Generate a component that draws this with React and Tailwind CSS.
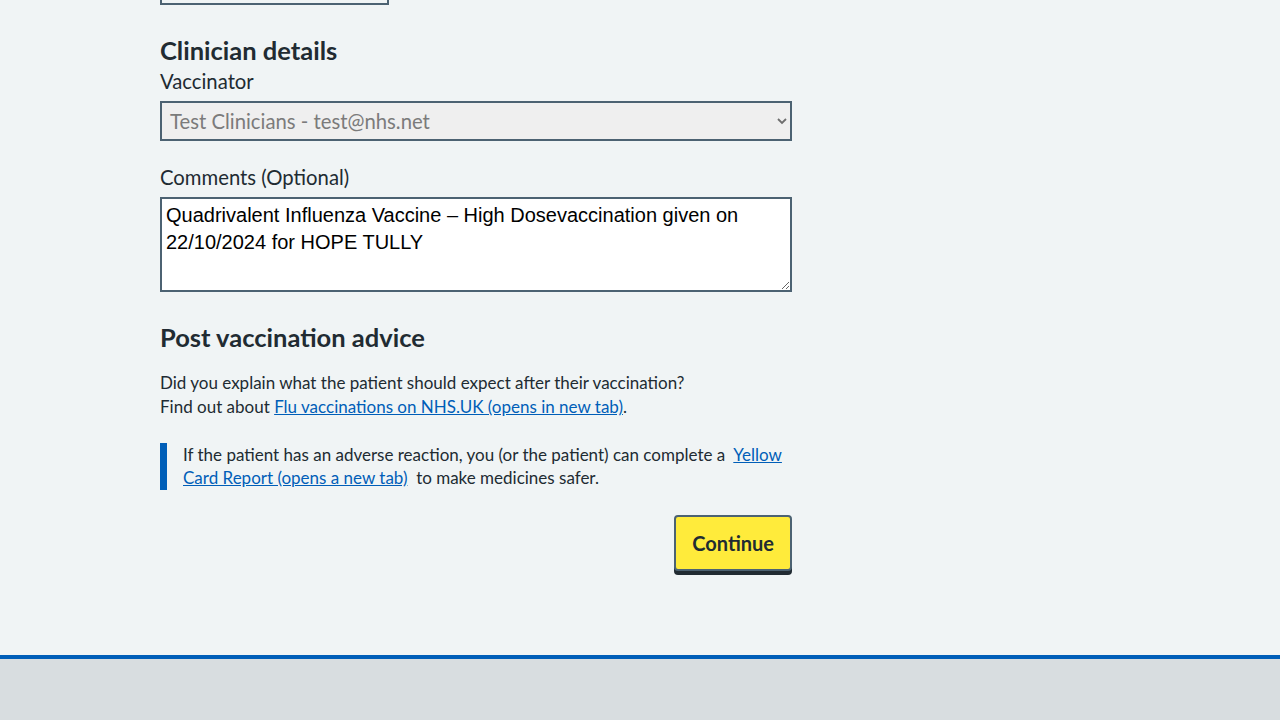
import React from "react";

export default function App() {
  const font = { fontFamily: "Lato, 'Noto Sans', sans-serif" };
  return (
    <div className="min-h-[720px] bg-[#f0f4f5] flex flex-col text-[#212b32]" style={font}>
      <main className="flex-1 pl-[160px] w-[792px] box-content pb-[80px]">
        <div className="w-[229px] h-[5px] border-2 border-t-0 border-[#4c6272]"></div>
        <h2 className="mt-[29px] text-[25.5px] font-bold leading-[32px]">Clinician details</h2>
        <label className="block text-[20.3px] leading-[28px] mt-[1px]">Vaccinator</label>
        <div className="mt-[6px] h-[40px] w-[632px] border-2 border-[#4c6272] bg-[#efefef] flex items-center justify-between pl-[8px] pr-[2px]">
          <span className="text-[20.3px] text-[#7b7b7b]">Test Clinicians - test@nhs.net</span>
          <svg width="12" height="8" viewBox="0 0 12 8">
            <path d="M2 2l4 4 4-4" fill="none" stroke="#6e6e6e" strokeWidth="1.8" />
          </svg>
        </div>
        <label className="block text-[20.3px] leading-[28px] mt-[22px]">Comments (Optional)</label>
        <textarea
          className="mt-[6px] block w-[632px] h-[95px] border-2 border-[#4c6272] bg-white px-[4px] py-[3px] text-[20px] leading-[27px] text-black outline-none"
          style={{ fontFamily: "'Liberation Sans', Arial, sans-serif" }}
          defaultValue="Quadrivalent Influenza Vaccine – High Dosevaccination given on 22/10/2024 for HOPE TULLY"
        />
        <h2 className="mt-[29px] text-[25.5px] font-bold leading-[32px]">Post vaccination advice</h2>
        <p className="mt-[18px] text-[17px] leading-[24px]">
          Did you explain what the patient should expect after their vaccination?
          <br />
          Find out about{" "}
          <a href="#" className="text-[#005eb8] underline">Flu vaccinations on NHS.UK (opens in new tab)</a>.
        </p>
        <p className="mt-[24px] w-[632px] border-l-[7px] border-[#005eb8] pl-[16px] pb-[1px] text-[17px] leading-[23px]">
          {"If the patient has an adverse reaction, you (or the patient) can complete a \u00a0"}
          <a href="#" className="text-[#005eb8] underline">Yellow Card Report (opens a new tab)</a>
          {"\u00a0 to make medicines safer."}
        </p>
        <div className="mt-[25px] w-[632px] flex justify-end">
          <button className="h-[56px] px-[16px] bg-[#ffeb3b] border-2 border-[#4c6272] rounded-[4px] text-[20px] font-bold text-[#212b32] shadow-[0_4px_0_#212b32]">
            Continue
          </button>
        </div>
      </main>
      <footer className="h-[65px] bg-[#d8dde0] border-t-4 border-[#005eb8]"></footer>
    </div>
  );
}
